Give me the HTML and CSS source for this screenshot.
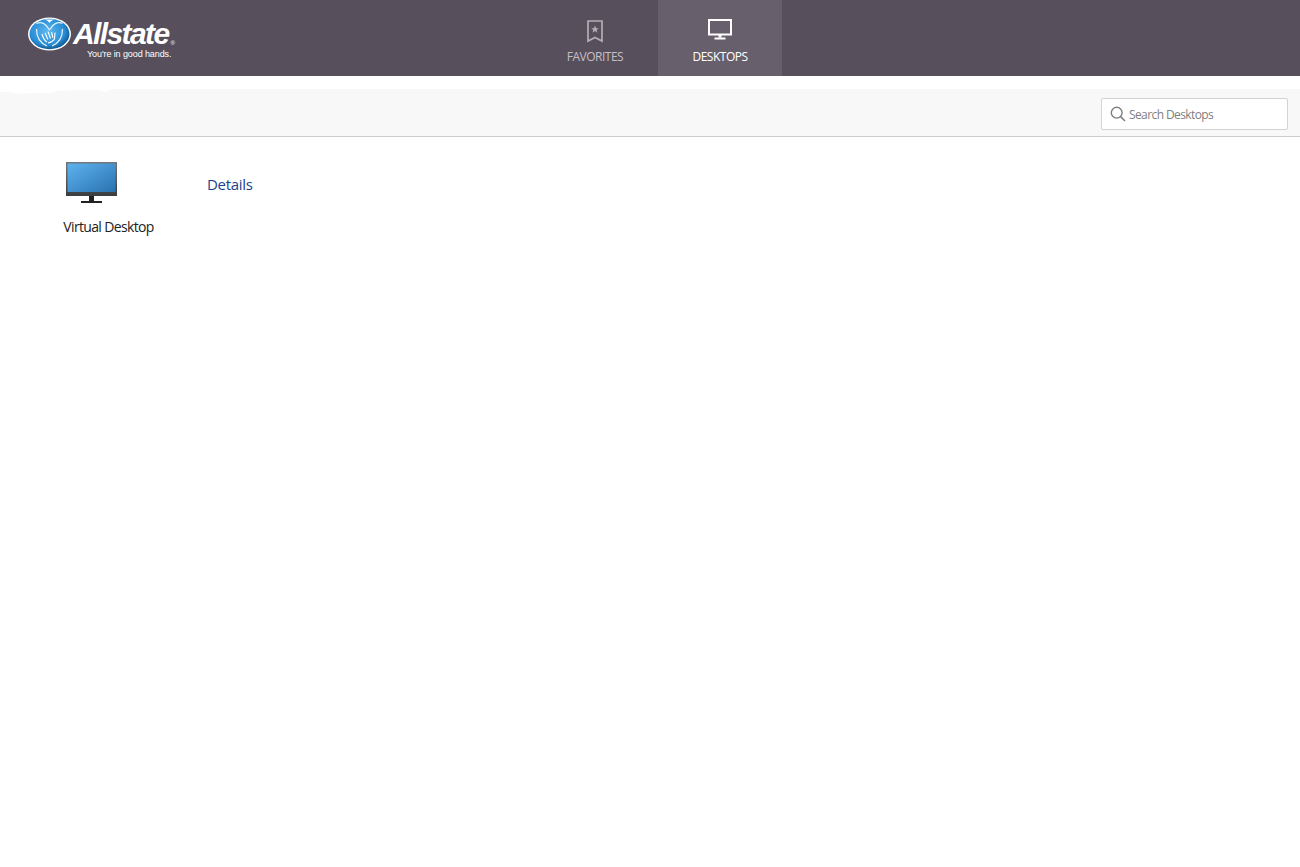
FILE: index.html
```html
<!DOCTYPE html>
<html lang="en">
<head>
<meta charset="utf-8">
<title>Allstate Desktops</title>
<link rel="stylesheet" href="styles.css">
</head>
<body>
<header class="topbar">
  <div class="logo">
    <svg class="logo-mark" width="44" height="34" viewBox="0 0 44 34" aria-hidden="true">
      <defs>
        <radialGradient id="globe" cx="0.45" cy="0.42" r="0.6">
          <stop offset="0" stop-color="#5fb8ee"/>
          <stop offset="0.7" stop-color="#2a8fd8"/>
          <stop offset="1" stop-color="#0d568f"/>
        </radialGradient>
      </defs>
      <ellipse cx="21.5" cy="17" rx="21.5" ry="16.500" fill="#fff"/>
      <ellipse cx="21.5" cy="17" rx="20" ry="15.200" fill="url(#globe)"/>
      <path d="M21.5 13C18 6.500 13 4 8.500 6.500M21.5 13C25 6.500 30 4 34.500 6.500" fill="none" stroke="#dff1fb" stroke-width="1.200"/>
      <path d="M21.5 6C20 3.800 18 3 16.500 2.500H26.500C25 3 23 3.800 21.5 6Z" fill="#fff"/>
      <path d="M8.500 12C8.500 20 12 26 19 29M34.500 12C34.500 20 31 26 24 29" fill="none" stroke="#e8f5fc" stroke-width="1.200"/>
      <path d="M14 17C15 21 16.500 23.500 19 25M17 16L20 22.500M20 14.500L22.500 21.500M23.500 15L25 21M27 15.500L26.500 22C25 24.500 23 25.500 20 26" fill="none" stroke="#fff" stroke-width="1.100"/>
    </svg>
    <div class="logo-text">
      <span class="logo-name">Allstate<sup class="logo-reg">®</sup></span>
      <span class="logo-tag">You're in good hands.</span>
    </div>
  </div>
  <nav class="tabs">
    <a class="tab">
      <svg width="16" height="23" viewBox="0 0 16 23" aria-hidden="true">
        <path d="M1 1H15V21L8 17.5L1 21Z" fill="none" stroke="#b3aeb6" stroke-width="1.7"/>
        <path d="M8 5.5L9.1 8.2H11.8L9.7 10L10.5 12.7L8 11.1L5.5 12.7L6.3 10L4.2 8.2H6.9Z" fill="#b3aeb6"/>
      </svg>
      <span>FAVORITES</span>
    </a>
    <a class="tab tab-active">
      <svg width="24" height="21" viewBox="0 0 24 21" aria-hidden="true">
        <rect x="1" y="1" width="22" height="14.5" fill="none" stroke="#fff" stroke-width="2"/>
        <rect x="10.5" y="16" width="3" height="2.5" fill="#fff"/>
        <rect x="6.5" y="18.500" width="11" height="2" fill="#fff"/>
      </svg>
      <span>DESKTOPS</span>
    </a>
  </nav>
</header>
<div class="toolbar">
  <svg class="torn" width="112" height="6" viewBox="0 0 112 6" aria-hidden="true">
    <path d="M0 0H112L105 3L100 1L75 1L58 2L50 4L30 4L22 5L10 3L0 3Z" fill="#fff"/>
  </svg>
  <label class="search">
    <svg width="16" height="16" viewBox="0 0 16 16" aria-hidden="true">
      <circle cx="6.7" cy="6.7" r="5.4" fill="none" stroke="#7f7f7f" stroke-width="1.4"/>
      <path d="M10.6 10.6L15 15" stroke="#7f7f7f" stroke-width="1.5"/>
    </svg>
    <span>Search Desktops</span>
  </label>
</div>
<main class="content">
  <div class="resource">
    <div class="resource-icon">
      <svg width="52" height="42" viewBox="0 0 52 42" aria-hidden="true">
        <defs>
          <linearGradient id="screen" x1="0" y1="0" x2="1" y2="1">
            <stop offset="0" stop-color="#5db3ef"/>
            <stop offset="1" stop-color="#2a72b0"/>
          </linearGradient>
          <linearGradient id="bezel" x1="0" y1="0" x2="0" y2="1">
            <stop offset="0" stop-color="#75787b"/>
            <stop offset="1" stop-color="#3a3d40"/>
          </linearGradient>
        </defs>
        <rect x="0" y="0" width="51" height="34" fill="url(#bezel)"/>
        <rect x="1.500" y="1.500" width="48" height="28.500" fill="url(#screen)"/>
        <rect x="23" y="34" width="5" height="6" fill="#222"/>
        <rect x="15" y="39" width="21" height="2" fill="#222"/>
      </svg>
    </div>
    <span class="resource-name">Virtual Desktop</span>
  </div>
  <a class="details">Details</a>
</main>
</body>
</html>
```
FILE: styles.css
```css
* { box-sizing: border-box; }
html, body { margin: 0; height: 100%; background: #fff; }
body { font-family: "Open Sans", "Noto Sans", sans-serif; color: #222; }

.topbar {
  display: flex;
  height: 76px;
  background: #584f5c;
  color: #fff;
}
.logo {
  display: flex;
  align-items: flex-start;
  width: 532px;
  padding: 17px 0 0 28px;
}
.logo-mark { flex: none; }
.logo-text { display: flex; flex-direction: column; margin: 2px 0 0 1px; }
.logo-name {
  display: block;
  height: 30px;
  font-family: "Liberation Sans", Arial, sans-serif;
  font-style: italic;
  font-weight: 700;
  font-size: 30px;
  line-height: 30px;
  letter-spacing: -1.6px;
  white-space: nowrap;
}
.logo-reg { font-size: 6px; line-height: 0; font-style: normal; font-weight: 400; letter-spacing: 0; vertical-align: -1px; margin-left: 2px; }
.logo-tag {
  font-family: "Liberation Sans", Arial, sans-serif;
  font-size: 9px;
  line-height: 10px;
  margin: 0 0 0 14px;
  letter-spacing: -0.1px;
  white-space: nowrap;
}

.tabs { display: flex; }
.tab {
  width: 126px;
  display: flex;
  flex-direction: column;
  align-items: center;
  padding-top: 20px;
  color: #c3bfc6;
  font-size: 12px;
  line-height: 16px;
  letter-spacing: -0.5px;
}
.tab span { margin-top: 6px; }
.tab-active { width: 124px; padding-top: 19px; background: #675f6b; color: #fff; }
.tab-active svg { margin-bottom: 3px; }

.toolbar {
  position: relative;
  display: flex;
  justify-content: flex-end;
  align-items: flex-start;
  height: 48px;
  margin-top: 13px;
  padding: 9px 12px 0 0;
  background: #f8f8f8;
  border-bottom: 1px solid #ccc;
}
.torn { position: absolute; left: 0; top: 0; }
.search {
  display: flex;
  align-items: center;
  gap: 3px;
  width: 187px;
  height: 32px;
  padding-left: 8px;
  background: #fff;
  border: 1px solid #d3d3d3;
  border-radius: 2px;
  color: #808080;
  font-size: 12px;
  letter-spacing: -0.6px;
}

.content {
  display: flex;
  align-items: flex-start;
  padding: 25px 0 0 54px;
}
.resource { display: flex; flex-direction: column; align-items: center; width: 109px; }
.resource-icon { display: flex; align-self: flex-start; margin-left: 12px; }
.resource-name { margin-top: 13px; font-size: 14px; line-height: 20px; letter-spacing: -0.65px; white-space: nowrap; color: #222; }
.details { margin: 12px 0 0 44px; font-size: 15px; line-height: 20px; letter-spacing: -0.3px; color: #1b3f8f; }
```
